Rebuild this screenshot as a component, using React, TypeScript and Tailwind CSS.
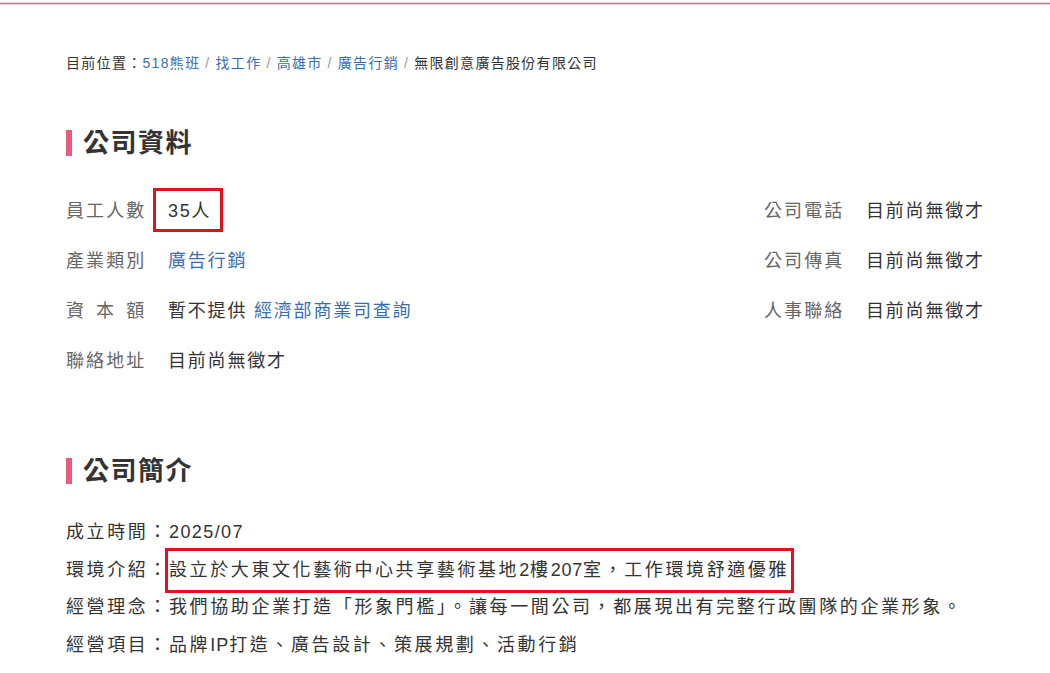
import React from "react";

const FONT =
  '"Liberation Sans", Arial, "Noto Sans CJK TC", "Noto Sans CJK SC", sans-serif';

function SectionTitle({ children }: { children: React.ReactNode }) {
  return (
    <div className="flex items-center h-[30px]">
      <span className="w-[6px] h-[26px] bg-[#e95a7c]" />
      <h2 className="ml-[11px] text-[26px] font-bold text-[#333] tracking-[1.5px] leading-none">
        {children}
      </h2>
    </div>
  );
}

function Label({ children }: { children: React.ReactNode }) {
  return (
    <span className="w-[80px] shrink-0 text-[#666] [text-align:justify] [text-align-last:justify]">
      {children}
    </span>
  );
}

function InfoRow({
  label,
  children,
}: {
  label: string;
  children: React.ReactNode;
}) {
  return (
    <div className="flex items-center h-[50px]">
      <Label>{label}</Label>
      <div className="ml-[22px] text-[#333] relative">{children}</div>
    </div>
  );
}

function Crumb({ children }: { children: React.ReactNode }) {
  return (
    <>
      <a className="text-[#3a6db0]">{children}</a>
      <span className="text-[#999] mx-[5px]">/</span>
    </>
  );
}

export default function App() {
  return (
    <div
      className="min-h-[673px] bg-white overflow-hidden"
      style={{ fontFamily: FONT }}
    >
      {/* top accent line */}
      <div className="pt-[2px]">
        <div className="h-px bg-[#f6c9d3]" />
        <div className="h-px bg-[#a68a93]" />
        <div className="h-px bg-[#f6c9d3]" />
      </div>

      <div className="pl-[66px] pr-[60px]">
        {/* breadcrumb */}
        <div className="mt-[50px] text-[14px] tracking-[1.3px] text-[#333] leading-[16px]">
          目前位置：
          <Crumb>518熊班</Crumb>
          <Crumb>找工作</Crumb>
          <Crumb>高雄市</Crumb>
          <Crumb>廣告行銷</Crumb>
          無限創意廣告股份有限公司
        </div>

        {/* company info */}
        <div className="mt-[57px]">
          <SectionTitle>公司資料</SectionTitle>
        </div>

        <div className="mt-[28px] flex text-[18px] tracking-[1.8px]">
          <div className="w-[698px]">
            <InfoRow label="員工人數">
              <span className="relative">
                35人
                <span className="absolute left-[-15px] right-[-12px] top-[-13px] bottom-[-11px] border-[3px] border-[#e0121b]" />
              </span>
            </InfoRow>
            <InfoRow label="產業類別">
              <span className="text-[#3a6db0]">廣告行銷</span>
            </InfoRow>
            <InfoRow label="資本額">
              暫不提供 <span className="text-[#3a6db0]">經濟部商業司查詢</span>
            </InfoRow>
            <InfoRow label="聯絡地址">目前尚無徵才</InfoRow>
          </div>
          <div>
            <InfoRow label="公司電話">目前尚無徵才</InfoRow>
            <InfoRow label="公司傳真">目前尚無徵才</InfoRow>
            <InfoRow label="人事聯絡">目前尚無徵才</InfoRow>
          </div>
        </div>

        {/* company intro */}
        <div className="mt-[70px]">
          <SectionTitle>公司簡介</SectionTitle>
        </div>

        <div className="mt-[28px] text-[18px] tracking-[2.6px] text-[#333] leading-[37.7px]">
          <p>
            成立時間：<span className="tracking-[1.4px]">2025/07</span>
          </p>
          <p>
            環境介紹：
            <span className="relative">
              設立於大東文化藝術中心共享藝術基地
              <span className="tracking-[0.8px]">2</span>樓
              <span className="tracking-[0.8px]">207</span>
              室，工作環境舒適優雅
              <span className="absolute left-[-4px] right-[-5px] top-[-12px] bottom-[-13px] border-[3px] border-[#e0121b]" />
            </span>
          </p>
          <p>
            經營理念：我們協助企業打造「形象門檻」。讓每一間公司，都展現出有完整行政團隊的企業形象。
          </p>
          <p>
            經營項目：品牌<span className="tracking-[1px]">IP</span>
            打造、廣告設計、策展規劃、活動行銷
          </p>
        </div>
      </div>
    </div>
  );
}
